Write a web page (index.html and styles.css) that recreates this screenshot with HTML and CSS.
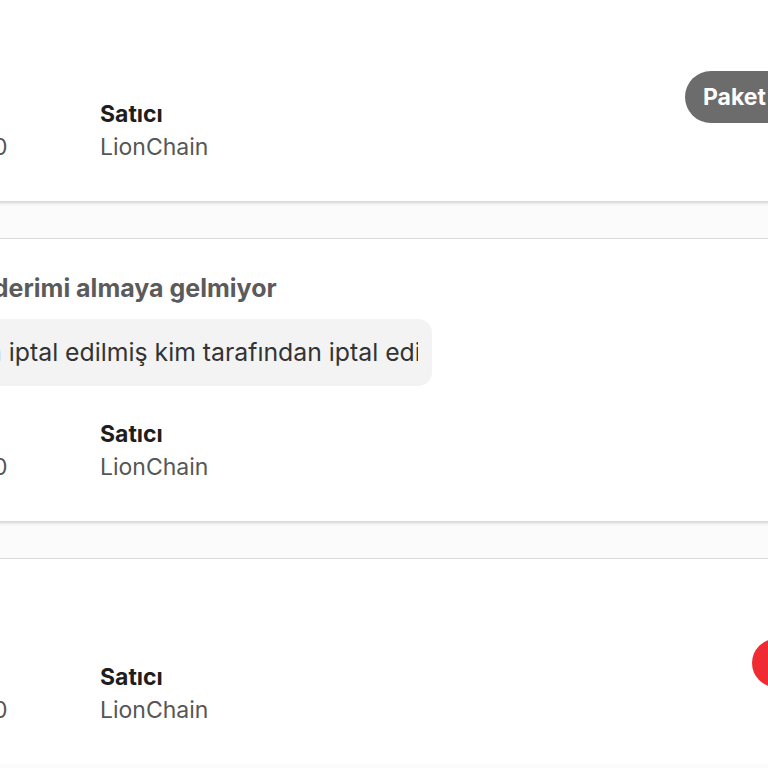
FILE: index.html
```html
<!DOCTYPE html>
<html lang="tr">
<head>
<meta charset="utf-8">
<title>Talepler</title>
<link rel="stylesheet" href="styles.css">
</head>
<body>
<div class="list">
  <article class="card">
    <div class="main">
      <h3 class="title">İade</h3>
      <div class="info">
        <div class="col">
          <span class="label">Tutar</span>
          <span class="value">11.112.450,00</span>
        </div>
        <div class="col">
          <span class="label">Satıcı</span>
          <span class="value">LionChain</span>
        </div>
      </div>
    </div>
    <div class="aside">
      <span class="pill">Paket Hazırlanıyor</span>
    </div>
  </article>

  <article class="card">
    <div class="main">
      <h3 class="title">Kargo gönderimi almaya gelmiyor</h3>
      <div class="bubble"><span class="bubble-text">Siparişim iptal edilmiş kim tarafından iptal edildi belli değil</span></div>
      <div class="info">
        <div class="col">
          <span class="label">Tutar</span>
          <span class="value">11.112.450,00</span>
        </div>
        <div class="col">
          <span class="label">Satıcı</span>
          <span class="value">LionChain</span>
        </div>
      </div>
    </div>
    <div class="aside"></div>
  </article>

  <article class="card">
    <div class="main">
      <h3 class="title">Diğer</h3>
      <div class="info">
        <div class="col">
          <span class="label">Tutar</span>
          <span class="value">11.112.450,00</span>
        </div>
        <div class="col">
          <span class="label">Satıcı</span>
          <span class="value">LionChain</span>
        </div>
      </div>
    </div>
    <div class="aside">
      <span class="dot"></span>
    </div>
  </article>
</div>
</body>
</html>
```

FILE: styles.css
```css
html, body {
  margin: 0;
  padding: 0;
}

body {
  background: #fbfbfb;
  overflow: hidden;
  font-family: Inter, "Noto Sans", sans-serif;
  color: #222;
}

.list {
  display: flex;
  flex-direction: column;
  gap: 37px;
  width: 1100px;
  margin: -5px 0 0 -158px;
}

.card {
  display: grid;
  grid-template-columns: 818px 1fr;
  align-items: center;
  background: #fff;
  border-top: 1px solid #dcdcdc;
  box-shadow: 0 2px 3px rgba(0, 0, 0, 0.16);
  padding: 34px 0 38px 25px;
}

.main {
  display: flex;
  flex-direction: column;
  align-items: flex-start;
}

.title {
  margin: 0 0 16px;
  font-size: 25px;
  line-height: 30px;
  font-weight: 700;
  color: #5b5b5b;
  white-space: nowrap;
}

.bubble {
  box-sizing: border-box;
  width: 565px;
  background: #f3f3f3;
  border-radius: 14px;
  padding: 18px 14px 19px 27px;
  margin-bottom: 10px;
}

.bubble-text {
  display: block;
  overflow: hidden;
  white-space: nowrap;
  font-size: 24.8px;
  line-height: 30px;
  color: #333;
}

.info {
  display: grid;
  grid-template-columns: 233px auto;
  margin-top: 22px;
}

.col {
  display: flex;
  flex-direction: column;
  gap: 1px;
}

.label {
  font-size: 23px;
  line-height: 32px;
  font-weight: 700;
  color: #1e1e1e;
}

.value {
  font-size: 23px;
  line-height: 32px;
  color: #565656;
}

.aside {
  display: flex;
  align-items: center;
}

.pill {
  background: #6c6c6c;
  color: #fff;
  font-weight: 700;
  font-size: 23px;
  line-height: 52px;
  padding: 0 18px;
  border-radius: 26px;
  white-space: nowrap;
}

.dot {
  width: 48px;
  height: 48px;
  border-radius: 50%;
  background: #ef2b33;
  margin-left: 67px;
  margin-top: 6px;
}
```
